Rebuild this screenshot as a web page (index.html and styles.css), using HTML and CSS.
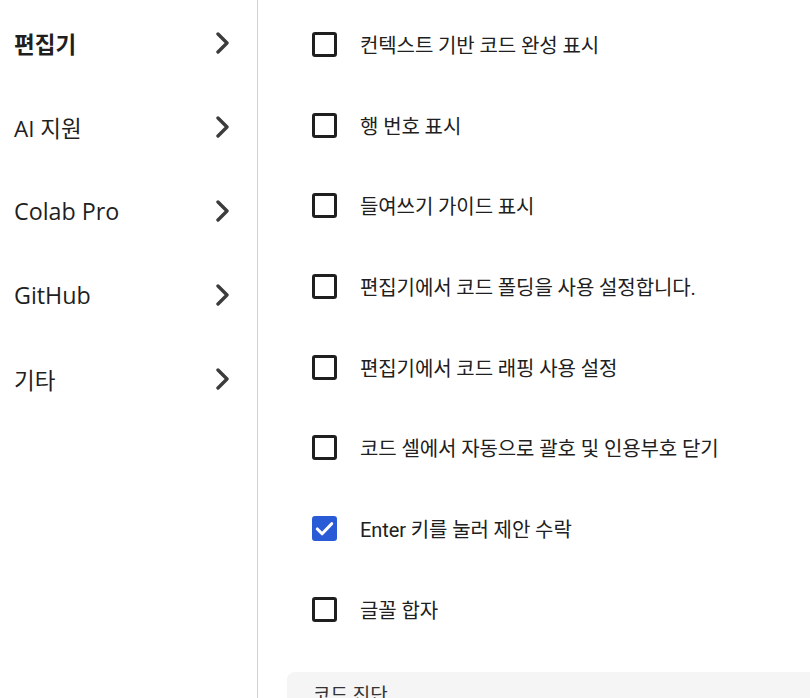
FILE: index.html
```html
<!DOCTYPE html>
<html lang="ko">
<head>
    <meta charset="UTF-8">
    <meta name="viewport" content="width=device-width, initial-scale=1.0">
    <title>설정</title>
    <link rel="stylesheet" href="styles.css">
</head>
<body>

    <div class="settings">
        <!-- Left menu -->
        <nav class="side-nav">
            <div class="nav-item active">
                <span>편집기</span>
                <svg class="chevron" viewBox="0 0 14 22"><polyline points="2,2 11,11 2,20"/></svg>
            </div>
            <div class="nav-item">
                <span>AI 지원</span>
                <svg class="chevron" viewBox="0 0 14 22"><polyline points="2,2 11,11 2,20"/></svg>
            </div>
            <div class="nav-item">
                <span class="latin">Colab Pro</span>
                <svg class="chevron" viewBox="0 0 14 22"><polyline points="2,2 11,11 2,20"/></svg>
            </div>
            <div class="nav-item">
                <span class="latin">GitHub</span>
                <svg class="chevron" viewBox="0 0 14 22"><polyline points="2,2 11,11 2,20"/></svg>
            </div>
            <div class="nav-item">
                <span>기타</span>
                <svg class="chevron" viewBox="0 0 14 22"><polyline points="2,2 11,11 2,20"/></svg>
            </div>
        </nav>

        <!-- Editor options -->
        <main class="panel">
            <label class="option"><span class="box"></span>컨텍스트 기반 코드 완성 표시</label>
            <label class="option"><span class="box"></span>행 번호 표시</label>
            <label class="option"><span class="box"></span>들여쓰기 가이드 표시</label>
            <label class="option"><span class="box"></span>편집기에서 코드 폴딩을 사용 설정합니다.</label>
            <label class="option"><span class="box"></span>편집기에서 코드 래핑 사용 설정</label>
            <label class="option"><span class="box"></span>코드 셀에서 자동으로 괄호 및 인용부호 닫기</label>
            <label class="option">
                <span class="box checked">
                    <svg viewBox="0 0 24 24"><polyline points="4.5,12.5 9.5,17.5 19.5,7"/></svg>
                </span>Enter 키를 눌러 제안 수락
            </label>
            <label class="option"><span class="box"></span>글꼴 합자</label>

            <div class="section">
                <div class="section-title">코드 진단</div>
            </div>
        </main>
    </div>

</body>
</html>
```

FILE: styles.css
```css
/* General body styles */
body {
    margin: 0;
    font-family: 'Roboto', 'Noto Sans CJK KR', sans-serif;
    color: #1f1f1f;
    background: #fff;
    overflow: hidden;
}

.settings {
    display: flex;
    height: 698px;
}

/* Left menu */
.side-nav {
    width: 257px;
    flex-shrink: 0;
    padding-top: 1px;
    border-right: 1px solid #d2d2d2;
}

.nav-item {
    height: 84px;
    display: flex;
    align-items: center;
    justify-content: space-between;
    padding: 0 27px 0 14px;
    font-family: 'Open Sans', 'Noto Sans CJK KR', sans-serif;
    font-size: 22.5px;
}

.nav-item .latin {
    font-size: 23.3px;
}

.nav-item.active {
    font-weight: bold;
}

.chevron {
    width: 14px;
    height: 22px;
    fill: none;
    stroke: #3c3c3c;
    stroke-width: 3.4;
    stroke-linecap: round;
    stroke-linejoin: round;
}

/* Options panel */
.panel {
    flex: 1;
    padding-top: 4px;
    padding-left: 29px;
}

.option {
    height: 80.7px;
    display: flex;
    align-items: center;
    padding-left: 25px;
    font-size: 20px;
    letter-spacing: -0.1px;
    color: #202020;
}

.box {
    width: 25px;
    height: 25px;
    box-sizing: border-box;
    border: 3px solid #1f1f1f;
    border-radius: 3px;
    margin-right: 23px;
    flex-shrink: 0;
    display: flex;
    align-items: center;
    justify-content: center;
}

.box.checked {
    background: #2a5bd6;
    border-color: #2a5bd6;
}

.box svg {
    width: 23px;
    height: 23px;
    flex-shrink: 0;
    fill: none;
    stroke: #fff;
    stroke-width: 3.2;
    stroke-linecap: round;
    stroke-linejoin: round;
}

/* Code diagnostics section */
.section {
    margin-top: 22px;
    background: #f5f5f5;
    border-radius: 8px 0 0 0;
    height: 120px;
    padding: 8px 26px;
}

.section-title {
    font-size: 19px;
    color: #333;
}
```
